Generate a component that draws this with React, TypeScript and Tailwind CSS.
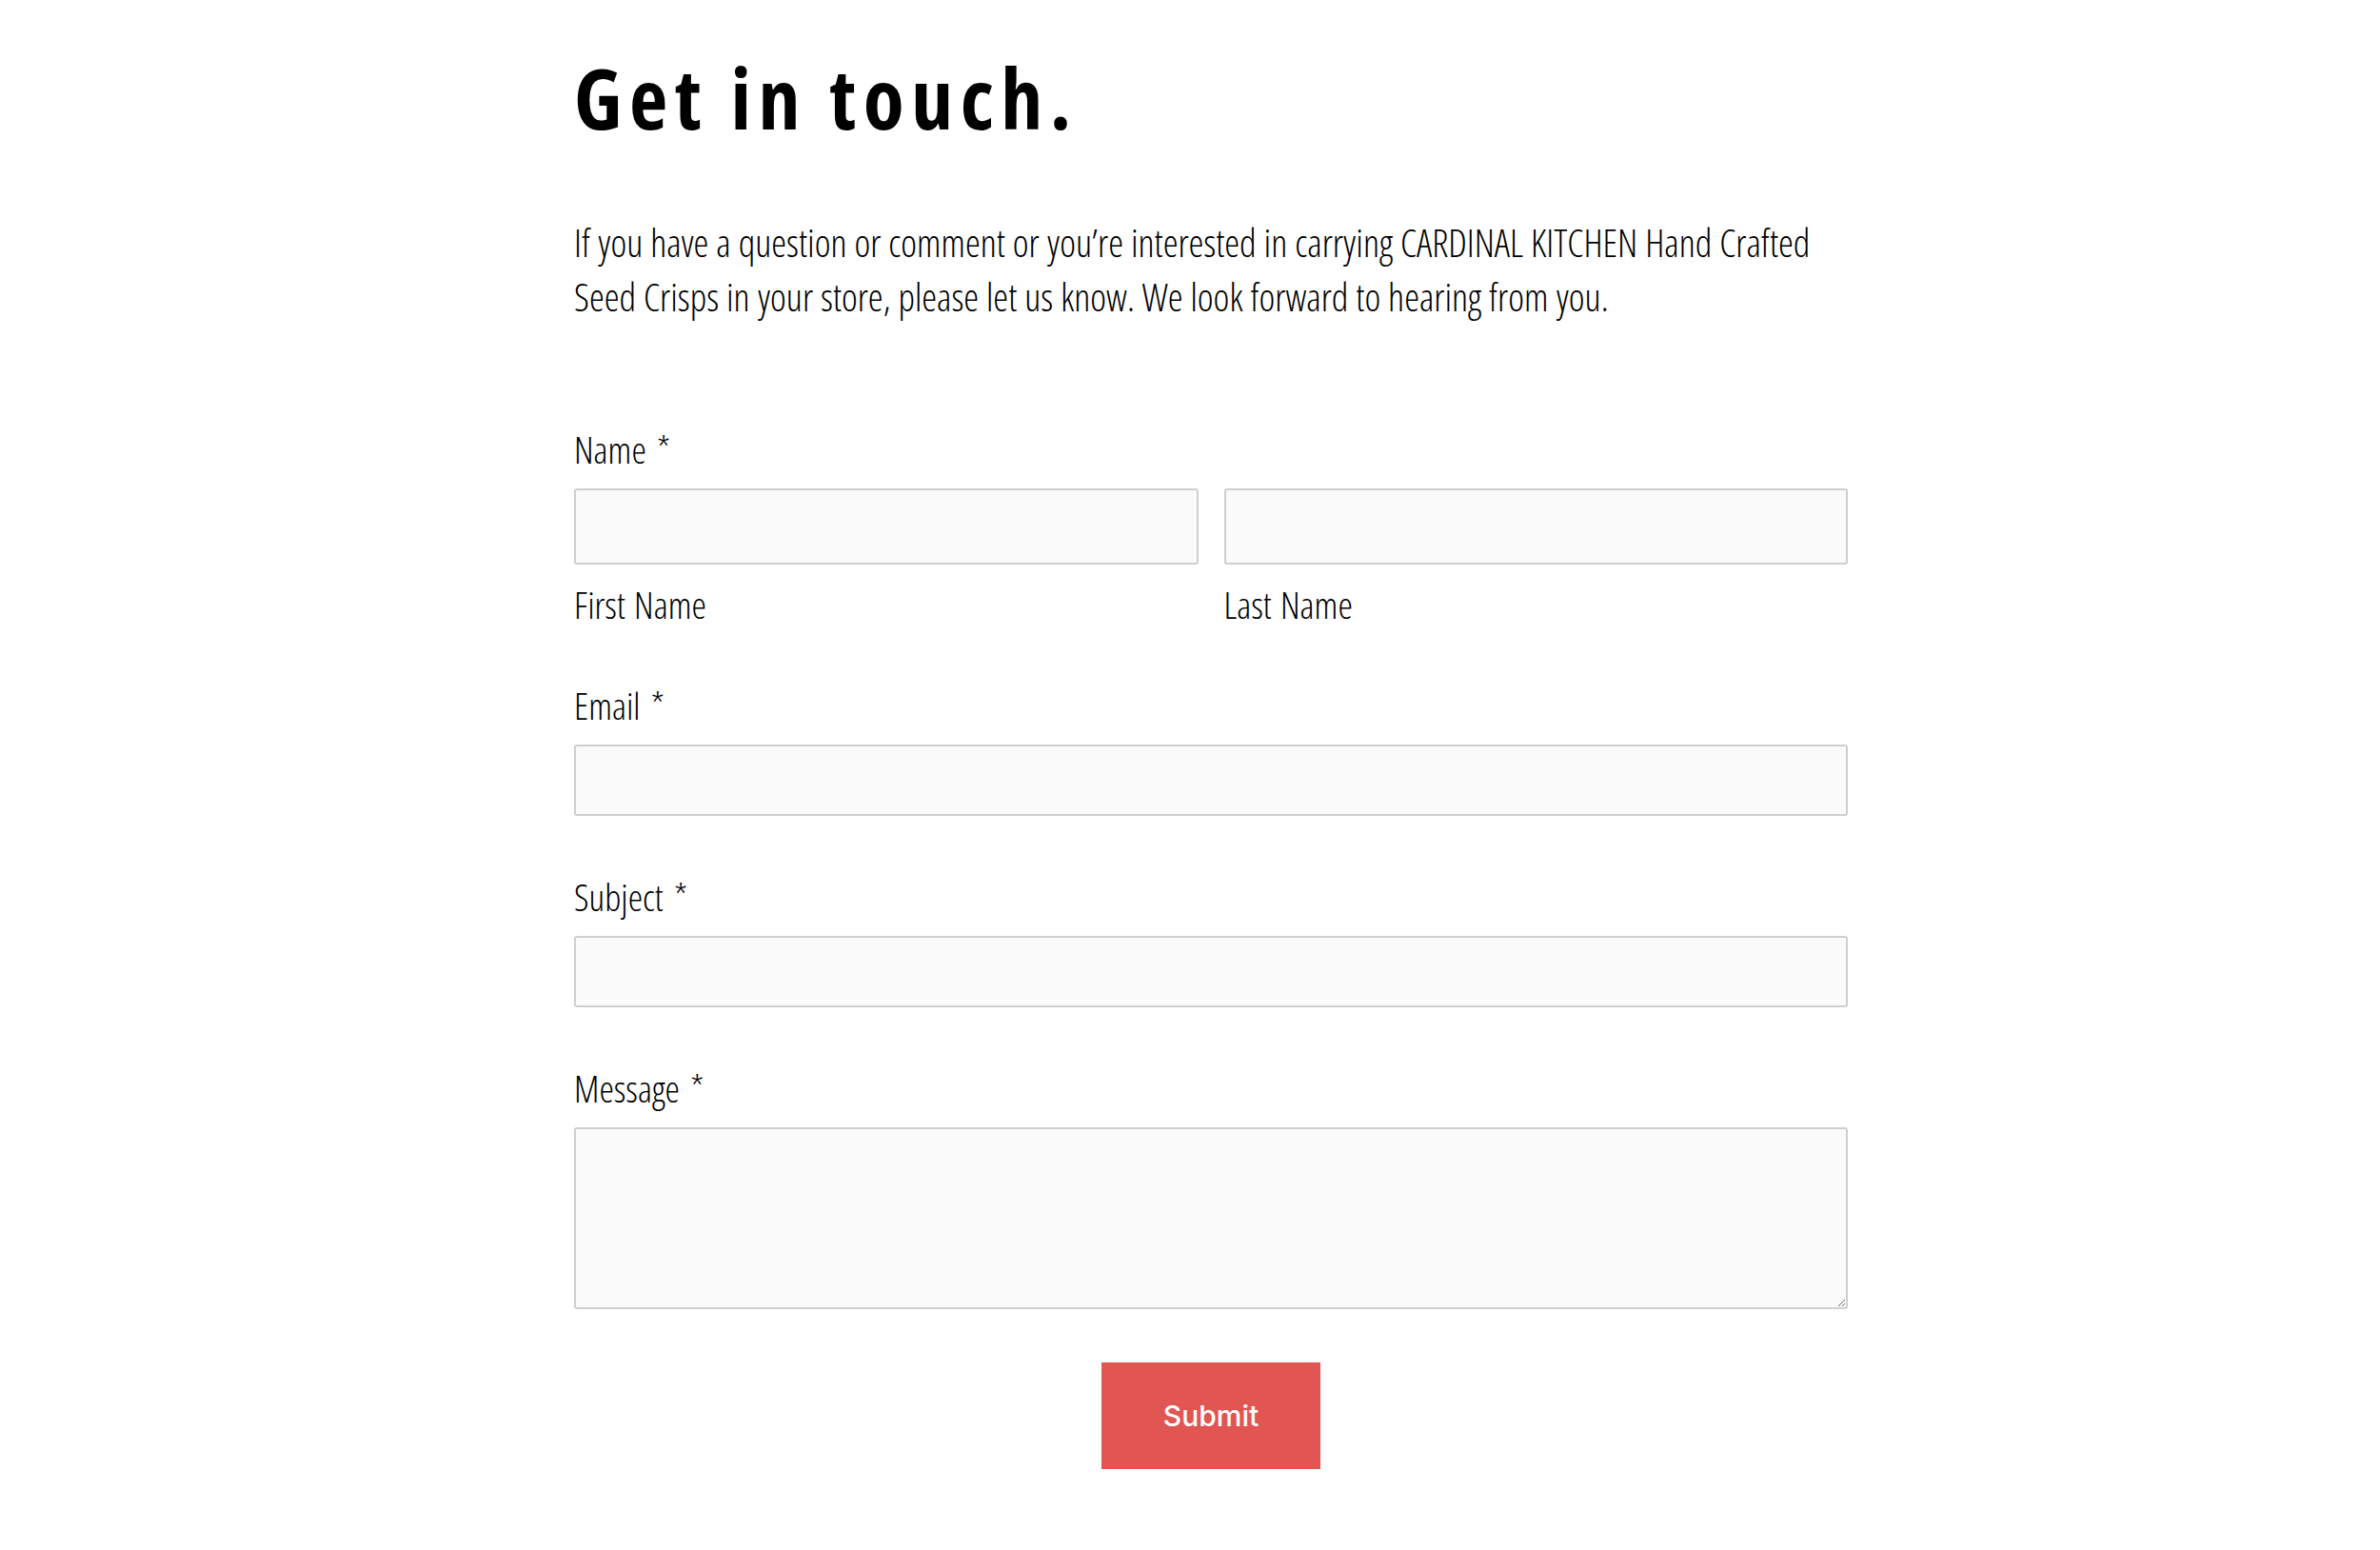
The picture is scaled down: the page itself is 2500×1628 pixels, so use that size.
import React from "react";

const body = "font-['Open_Sans',sans-serif] font-stretch-condensed";

function Label({ text }: { text: string }) {
  return (
    <label className={`${body} block text-[39px] leading-[48px] font-light [word-spacing:4px] text-black`}>
      {text} <span>*</span>
    </label>
  );
}

const field =
  "block w-full rounded-[3px] border-2 border-[#cfcfcf] bg-[#fafafa] outline-none";

const subLabel = `${body} mt-[18px] text-[39px] leading-[48px] font-light [word-spacing:2px] text-black`;

export default function App() {
  return (
    <div className="min-h-screen bg-white">
      <main className="ml-[603px] w-[1338px] pt-[57px] pb-[85px]">
        {/* Heading */}
        <h1 className={`${body} text-[88px] leading-[90px] font-bold tracking-[7.5px] text-black`}>
          Get in touch.
        </h1>

        {/* Intro */}
        <p className={`${body} mt-[79px] whitespace-nowrap text-[40px] leading-[57px] font-light [word-spacing:0.5px] text-black`}>
          If you have a question or comment or you’re interested in carrying CARDINAL KITCHEN Hand Crafted
          <br />
          Seed Crisps in your store, please let us know. We look forward to hearing from you.
        </p>

        <form className="mt-[108px]" onSubmit={(e) => e.preventDefault()}>
          {/* Name */}
          <Label text="Name" />
          <div className="mt-[17px] grid grid-cols-2 gap-[27px]">
            <div>
              <input className={`${field} h-[80px]`} />
              <div className={subLabel}>First Name</div>
            </div>
            <div>
              <input className={`${field} h-[80px]`} />
              <div className={subLabel}>Last Name</div>
            </div>
          </div>

          {/* Email */}
          <div className="mt-[58px]">
            <Label text="Email" />
            <input type="email" className={`${field} mt-[17px] h-[75px]`} />
          </div>

          {/* Subject */}
          <div className="mt-[61px]">
            <Label text="Subject" />
            <input className={`${field} mt-[17px] h-[75px]`} />
          </div>

          {/* Message */}
          <div className="mt-[61px]">
            <Label text="Message" />
            <textarea className={`${field} mt-[17px] h-[191px]`} />
          </div>

          <div className="mt-[56px] flex justify-center">
            <button
              type="submit"
              className="h-[112px] w-[230px] bg-[#e15553] font-['Inter',sans-serif] text-[30px] font-medium text-white"
            >
              Submit
            </button>
          </div>
        </form>
      </main>
    </div>
  );
}
